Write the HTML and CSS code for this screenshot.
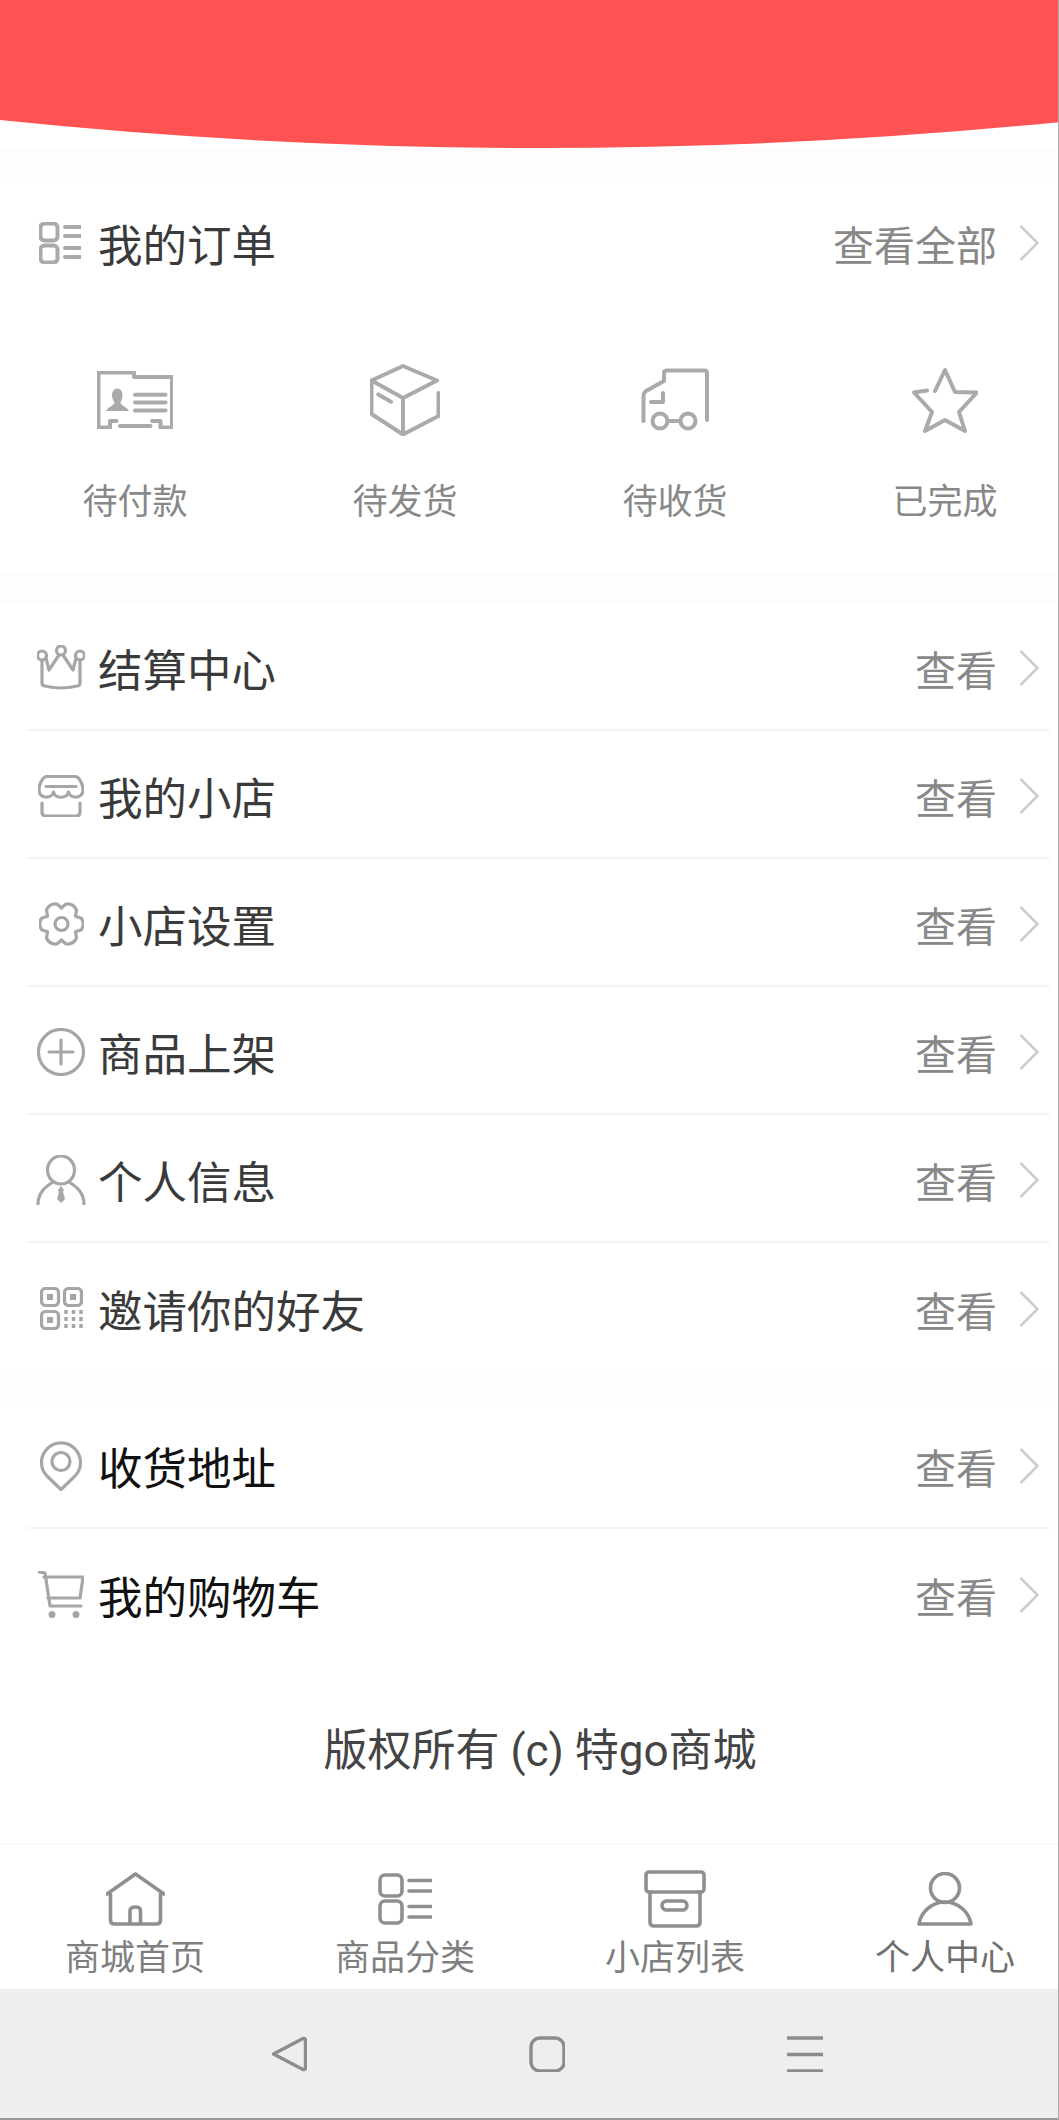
FILE: index.html
```html
<!DOCTYPE html>
<html lang="zh-CN">
<head>
<meta charset="utf-8">
<title>个人中心</title>
<link rel="stylesheet" href="styles.css">
</head>
<body>
<div class="page">
  <svg class="hero" width="1080" height="148" viewBox="0 0 1080 148"><path d="M0 0H1080V120Q540 176 0 120Z"/></svg>

  <section class="card orders">
    <div class="orders-head">
      <svg class="ic ic-light head-icon" width="42" height="42" viewBox="0 0 42 42"><rect x="1.5" y="1.5" width="17" height="17" rx="4"/><rect x="1.5" y="23.5" width="17" height="17" rx="4"/><path d="M26 5H42M26 14H42M26 26H42M26 35H42"/></svg>
      <span class="label">我的订单</span>
      <span class="value">查看全部</span>
      <svg class="chev" width="20" height="36" viewBox="0 0 20 36"><path d="M1.500 1L18.500 18L1.500 35"/></svg>
    </div>
    <div class="order-grid">
      <div class="order-item">
        <div class="order-icon"><svg class="ic ic-light" width="76" height="58" viewBox="0 0 76 58"><path d="M13 50V50H19.500M23 55H53.500M55 50H63.500V56.500H75V6H37V1.500H1.500V56.500H13V50"/><path d="M38 23.700H68.500M38 31.500H68.500M38 39.400H68.500"/><path class="fill" d="M20.300 17.500C24 17.500 25.500 21 25.500 24.500C25.500 28 24 30 23.500 32C25 35 30 36 32 40H9C11 36 16 35 17.500 32C17 30 15 28 15 24.500C15 21 17 17.500 20.300 17.500Z"/></svg></div>
        <div class="order-name">待付款</div>
      </div>
      <div class="order-item">
        <div class="order-icon"><svg class="ic ic-light" width="70" height="72" viewBox="0 0 70 72"><path d="M33 2L67 16.500L33 34L1.500 16.500ZM1.500 16.500V50L33 70.500L68.500 52V29M33 34V70.500M8.300 30.600L21 37.800"/></svg></div>
        <div class="order-name">待发货</div>
      </div>
      <div class="order-item">
        <div class="order-icon"><svg class="ic ic-light" width="68" height="68" viewBox="0 -3 68 68"><path d="M66 51V4Q66 1.500 63 1.500H26Q23 1.500 23 4V12L5 22Q2.500 24 2.500 27V52M22 24V33H10M27 52H39"/><circle cx="19" cy="52" r="7.500"/><circle cx="47" cy="52" r="7.500"/></svg></div>
        <div class="order-name">待收货</div>
      </div>
      <div class="order-item">
        <div class="order-icon"><svg class="ic ic-light" width="66" height="66" viewBox="0 0 66 66"><path d="M15 23.500L2 25.500L20 45L13 64L33 53L53 64L47 45L65 25.500L43 25L33 3L23 24"/></svg></div>
        <div class="order-name">已完成</div>
      </div>
    </div>
  </section>

  <section class="card">
    <div class="row">
      <div class="row-icon"><svg class="ic ic-thin" width="48" height="46" viewBox="0 0 48 46"><circle cx="24" cy="5.500" r="4.500"/><circle cx="5" cy="10.500" r="4.500"/><circle cx="43" cy="10.500" r="4.500"/><path d="M9 13L12 25L22 10M26 10L36 25L39 13M5 15V38Q5 41 8 41Q24 45 40 41Q43 41 43 38V15"/></svg></div>
      <span class="label">结算中心</span><span class="value">查看</span>
      <svg class="chev" width="20" height="36" viewBox="0 0 20 36"><path d="M1.500 1L18.500 18L1.500 35"/></svg>
    </div>
    <div class="row">
      <div class="row-icon"><svg class="ic ic-thin" width="46" height="42" viewBox="0 0 46 42"><path d="M9 1.500H37C41 1.500 45 9 45 15C45 24 32 24 30.500 17C29 24 17 24 15.500 17C14 24 1 24 1 15C1 9 5 1.500 9 1.500ZM8 11.500H38M4 28V37Q4 41 8 41H38Q42 41 42 37V28"/></svg></div>
      <span class="label">我的小店</span><span class="value">查看</span>
      <svg class="chev" width="20" height="36" viewBox="0 0 20 36"><path d="M1.500 1L18.500 18L1.500 35"/></svg>
    </div>
    <div class="row">
      <div class="row-icon"><svg class="ic ic-thin" width="45" height="44" viewBox="0 0 45 44"><path d="M36.400 14Q39 15.500 42.100 16Q46.500 22 42.100 28Q39 28.500 36.400 30Q37 33 37.500 36Q34.500 42.800 27.100 42Q24.500 40 22.500 38Q20.500 40 17.900 42Q10.500 42.800 7.500 36Q8 33 8.600 30Q6 28.500 2.900 28Q-1.500 22 2.900 16Q6 15.500 8.600 14Q8 11 7.500 8Q10.500 1.200 17.900 2Q20.500 4 22.500 6Q24.500 4 27.100 2Q34.500 1.200 37.500 8Q37 11 36.400 14Z"/><circle cx="22.500" cy="22" r="6.500"/></svg></div>
      <span class="label">小店设置</span><span class="value">查看</span>
      <svg class="chev" width="20" height="36" viewBox="0 0 20 36"><path d="M1.500 1L18.500 18L1.500 35"/></svg>
    </div>
    <div class="row">
      <div class="row-icon"><svg class="ic ic-thin" width="48" height="48" viewBox="0 0 48 48"><circle cx="24" cy="24" r="22.500"/><path d="M24 12V36M12 24H36"/></svg></div>
      <span class="label">商品上架</span><span class="value">查看</span>
      <svg class="chev" width="20" height="36" viewBox="0 0 20 36"><path d="M1.500 1L18.500 18L1.500 35"/></svg>
    </div>
    <div class="row">
      <div class="row-icon"><svg class="ic ic-thin" width="50" height="50" viewBox="0 0 50 50"><ellipse cx="25" cy="15" rx="13.500" ry="14"/><path d="M2 49C2 38 9 32 17 27M33 27C41 32 48 38 48 49"/><path class="fill" d="M25 31L22 35L23 37L21 44L25 48L29 44L27 37L28 35Z"/></svg></div>
      <span class="label">个人信息</span><span class="value">查看</span>
      <svg class="chev" width="20" height="36" viewBox="0 0 20 36"><path d="M1.500 1L18.500 18L1.500 35"/></svg>
    </div>
    <div class="row row-last">
      <div class="row-icon"><svg class="ic ic-thin" width="43" height="43" viewBox="0 0 43 43"><rect x="1.500" y="1.500" width="17" height="17" rx="4"/><rect x="24.500" y="1.500" width="17" height="17" rx="4"/><rect x="1.500" y="24.500" width="17" height="17" rx="4"/><path class="fill" d="M7 7H13V13H7ZM30 7H36V13H30ZM7 30H13V36H7Z"/><path class="dash" d="M26 23V43M33.500 23V43M41 23V43"/></svg></div>
      <span class="label">邀请你的好友</span><span class="value">查看</span>
      <svg class="chev" width="20" height="36" viewBox="0 0 20 36"><path d="M1.500 1L18.500 18L1.500 35"/></svg>
    </div>
  </section>

  <section class="card">
    <div class="row">
      <div class="row-icon"><svg class="ic ic-thin" width="42" height="50" viewBox="0 0 42 50"><path d="M21 48.500L7 35A19.500 19.500 0 1 1 35 35Z"/><circle cx="21" cy="20.500" r="9"/></svg></div>
      <span class="label label-dark">收货地址</span><span class="value">查看</span>
      <svg class="chev" width="20" height="36" viewBox="0 0 20 36"><path d="M1.500 1L18.500 18L1.500 35"/></svg>
    </div>
    <div class="row row-last">
      <div class="row-icon"><svg class="ic ic-thin" width="46" height="48" viewBox="0 0 46 48"><path d="M1 1L7 2L12 35H43M6 6H45L42 27H10"/><path class="fill" d="M14 40A3.500 3.500 0 1 0 14 47A3.500 3.500 0 1 0 14 40ZM38 40A3.500 3.500 0 1 0 38 47A3.500 3.500 0 1 0 38 40Z"/></svg></div>
      <span class="label label-dark">我的购物车</span><span class="value">查看</span>
      <svg class="chev" width="20" height="36" viewBox="0 0 20 36"><path d="M1.500 1L18.500 18L1.500 35"/></svg>
    </div>
  </section>

  <div class="copyright">版权所有 (c) 特go商城</div>

  <nav class="tabbar">
    <div class="tab">
      <div class="tab-icon"><svg class="ic ic-dark" width="59" height="54" viewBox="0 0 59 54"><path d="M1 22L29.500 2L58 22M4.500 22V48Q4.500 52 8.500 52H50.500Q54.500 52 54.500 48V22M24 52V39Q24 35 29.500 35Q34.500 35 34.500 39V52"/></svg></div>
      <div class="tab-name">商城首页</div>
    </div>
    <div class="tab">
      <div class="tab-icon"><svg class="ic ic-dark" width="54" height="52" viewBox="0 0 54 52"><rect x="2" y="2" width="22" height="21" rx="5"/><rect x="2" y="28" width="22" height="22" rx="5"/><path d="M31 7.500H53M31 18H53M31 33.500H53M31 44H53"/></svg></div>
      <div class="tab-name">商品分类</div>
    </div>
    <div class="tab">
      <div class="tab-icon"><svg class="ic ic-dark" width="62" height="58" viewBox="0 0 62 58"><rect x="2" y="2" width="58" height="20" rx="3"/><path d="M6 22V52Q6 56 10 56H52Q56 56 56 52V22"/><rect x="18" y="31" width="25" height="9" rx="4.500"/></svg></div>
      <div class="tab-name">小店列表</div>
    </div>
    <div class="tab">
      <div class="tab-icon"><svg class="ic ic-dark" width="56" height="54" viewBox="0 0 56 54"><circle cx="28" cy="16" r="14.500"/><path d="M2 52C4 39 16 30 28 30C40 30 52 39 54 52Z"/></svg></div>
      <div class="tab-name tab-name-active">个人中心</div>
    </div>
  </nav>

  <div class="sysbar">
    <div class="sys-key"><svg class="ic ic-sys" width="36" height="36" viewBox="0 0 36 36"><path d="M2.500 18L32 2.500Q34.500 2 34.500 4.500V31.500Q34.500 34 32 33.500Z"/></svg></div>
    <div class="sys-key"><svg class="ic ic-sys" width="36" height="36" viewBox="0 0 36 36"><rect x="2" y="2" width="33" height="33" rx="9"/></svg></div>
    <div class="sys-key"><svg class="ic ic-sys" width="36" height="36" viewBox="0 0 36 36"><path d="M0 2H36M0 18.500H36M0 35H36"/></svg></div>
  </div>
</div>
</body>
</html>
```
FILE: styles.css
```css
* { box-sizing: border-box; }
html, body { margin: 0; padding: 0; }
body {
  font-family: "Noto Sans CJK SC", "Noto Sans", sans-serif;
  background: #fff;
}
.page {
  width: 1059px;
  height: 2120px;
  overflow: hidden;
  position: relative;
  background: #fefcfe;
}
.hero { display: block; background: #fff; }
.hero path { fill: #ff5353; }

.card { background: #fff; margin-top: 31px; }
.orders { height: 394px; margin-top: 30px; }
.orders-head {
  display: flex;
  align-items: center;
  height: 130px;
  padding: 0 20px 0 39px;
}
.head-icon { margin-right: 17px; }

.order-grid {
  display: grid;
  grid-template-columns: repeat(4, 270px);
  padding-top: 52px;
}
.order-item { display: flex; flex-direction: column; align-items: center; }
.order-icon { height: 80px; display: flex; align-items: center; justify-content: center; }
.order-name { margin-top: 36px; font-size: 35px; line-height: 46px; color: #888; }

.row {
  display: flex;
  align-items: center;
  height: 128px;
  margin: 0 9px 0 28px;
  padding: 4px 11px 0 8px;
  border-bottom: 2px solid #f5f5f5;
}
.row-last { height: 127px; border-bottom: 0; }
.row-icon { width: 50px; margin-right: 12px; display: flex; justify-content: center; }

.label { font-size: 44.5px; line-height: 60px; color: #3a3a3a; }
.label-dark { color: #111; }
.value { margin-left: auto; font-size: 41px; line-height: 56px; color: #888; }
.chev { margin-left: 22px; fill: none; stroke: #ccc; stroke-width: 2.500; }

.ic { fill: none; display: block; stroke-linejoin: round; stroke-linecap: round; }
.ic .fill { stroke: none; }
.ic-light { stroke: #aaa; stroke-width: 4; }
.ic-light .fill { fill: #aaa; }
.ic-thin { stroke: #a6a6a6; stroke-width: 3.200; }
.ic-thin .fill { fill: #a6a6a6; }
.ic-thin .dash { stroke-width: 3.500; stroke-linecap: butt; stroke-dasharray: 4 3; }
.ic-dark { stroke: #8f8f8f; stroke-width: 3.600; }
.ic-sys { stroke: #8c8c8c; stroke-width: 3.400; }

.copyright {
  width: 1080px;
  height: 187px;
  padding-bottom: 6px;
  display: flex;
  align-items: center;
  justify-content: center;
  background: #fff;
  font-family: Roboto, "Noto Sans CJK SC", sans-serif;
  font-size: 44px;
  color: #444;
}

.tabbar {
  display: grid;
  grid-template-columns: repeat(4, 270px);
  height: 146px;
  padding-top: 24px;
  background: #fff;
  border-top: 2px solid #f6f6f6;
}
.tab { display: flex; flex-direction: column; align-items: center; }
.tab-icon { height: 60px; display: flex; align-items: center; justify-content: center; }
.tab-name { margin-top: 3px; font-size: 35px; line-height: 46px; color: #7f7f7f; }
.tab-name-active { color: #6f6f6f; }

.sysbar {
  display: grid;
  grid-template-columns: repeat(3, 258px);
  justify-content: center;
  align-items: center;
  height: 131px;
  padding-left: 35px;
  background: #eeeeef;
  border-bottom: 2px solid #999;
}
.sys-key { display: flex; justify-content: center; }

.page::after {
  content: "";
  position: absolute;
  top: 0;
  right: 0;
  bottom: 0;
  width: 1px;
  background: #aaa;
}
```
